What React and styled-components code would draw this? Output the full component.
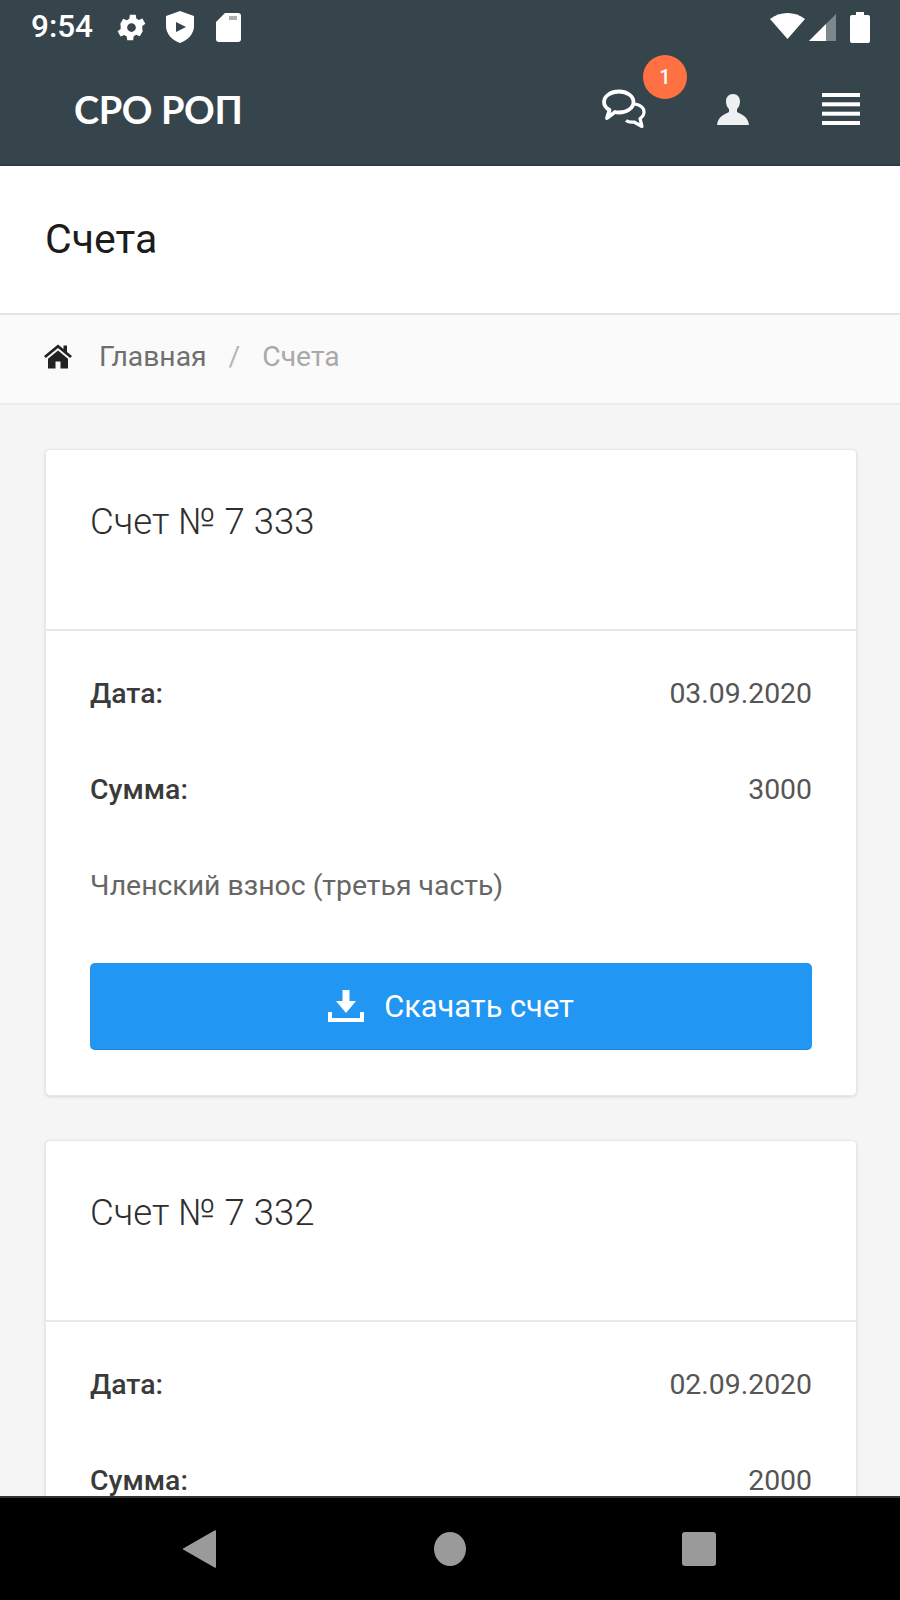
import React from 'react';
import styled, { createGlobalStyle } from 'styled-components';

const Global = createGlobalStyle`
  html, body { margin: 0; padding: 0; background: #f5f5f5; }
  * { box-sizing: border-box; }
`;

const Screen = styled.div`
  width: 900px; height: 1600px; display: flex; flex-direction: column; overflow: hidden;
  font-family: Roboto, "Liberation Sans", sans-serif; background: #f5f5f5;
`;
const TopBar = styled.header`
  flex: none; height: 166px; background: #36444c; display: flex; flex-direction: column;
  border-bottom: 2px solid #2e3b43;
`;
const StatusBar = styled.div`
  height: 54px; display: flex; align-items: center; padding: 0 30px 0 31px; color: #fff;
`;
const Time = styled.span`
  font-size: 31.5px; font-weight: 500; width: 82.5px; line-height: 1;
`;
const StatusIcons = styled.div`
  display: flex; align-items: center; gap: ${p => p.$gap}px; margin-left: ${p => p.$auto ? 'auto' : '0'};
`;
const SignalGroup = styled.div`
  display: flex; align-items: center; gap: 4px; margin-right: 14px;
`;
const AppBar = styled.div`
  flex: 1; display: flex; align-items: center; padding: 0 40px 0 74px; position: relative;
`;
const Logo = styled.div`
  font-family: Lato, sans-serif; font-size: 38px; font-weight: 700; color: #fff; flex: 1;
  letter-spacing: -0.4px;
`;
const Tool = styled.button`
  all: unset; position: relative; display: flex; width: ${p => p.$w}px; justify-content: center;
  margin-left: ${p => p.$ml || 0}px;
`;
const Badge = styled.span`
  position: absolute; left: 41px; top: -34px; width: 44px; height: 44px; border-radius: 50%;
  background: #ff7043; color: #fff; font-size: 20px; font-weight: 500; display: flex;
  align-items: center; justify-content: center;
`;
const TitleBand = styled.div`
  flex: none; height: 149px; background: #fff; border-bottom: 2px solid #e4e4e4; display: flex;
  align-items: center; padding: 0 45px 2px;
`;
const PageTitle = styled.h1`
  margin: 0; font-size: 41px; font-weight: 400; color: #1c1c1c;
`;
const Crumbs = styled.nav`
  flex: none; height: 90px; background: #fafafa; border-bottom: 2px solid #ececec; display: flex;
  align-items: center; padding: 0 44px 6px; font-size: 28.3px; color: #6f6f6f;
`;
const HomeIcon = styled.svg`
  flex: none; margin-top: 1px;
`;
const CrumbLink = styled.span`
  margin-left: 27px;
`;
const Slash = styled.span`
  margin: 0 22px; color: #b5b5b5;
`;
const CrumbNow = styled.span`
  color: #a9a9a9;
`;
const Content = styled.main`
  flex: 1; min-height: 0; overflow: hidden; padding: 44px 43px 0 45px; display: flex;
  flex-direction: column; gap: 44px;
`;
const Card = styled.section`
  flex: none; background: #fff; border: 1px solid #e8e8e8; border-radius: 5px;
  box-shadow: 0 1px 3px rgba(0,0,0,.12);
`;
const CardHead = styled.div`
  height: 181px; border-bottom: 2px solid #e8e8e8; padding: 52px 44px 0;
`;
const CardTitle = styled.h2`
  margin: 0; font-size: 36.6px; font-weight: 300; line-height: 40px; color: #2e2e2e;
`;
const CardBody = styled.div`
  padding: 42px 44px 45px; display: flex; flex-direction: column;
`;
const Row = styled.div`
  display: flex; justify-content: space-between; align-items: center; height: 40px;
  margin-bottom: 56px; font-size: 28.4px;
  &:last-child { margin-bottom: 0; }
`;
const Label = styled.span`
  font-weight: 500; color: #3a3a3a;
`;
const Value = styled.span`
  color: #555; font-weight: 400;
`;
const Note = styled.div`
  height: 40px; line-height: 40px; font-size: 28.4px; color: #666; margin: 1px 0 57px;
`;
const DownloadButton = styled.button`
  all: unset; height: 86px; background: #2196f3; border-radius: 5px; color: #fff; display: flex;
  align-items: center; justify-content: center; gap: 20px; font-size: 30.8px; font-family: inherit;
  border-bottom: 1px solid #1787e6;
`;
const NavBar = styled.footer`
  flex: none; height: 104px; background: #000; display: flex; align-items: center;
  justify-content: space-between; padding: 0 184px 0 183px; border-top: 2px solid #333;
`;

const Gear = () => (
  <svg width="35" height="35" viewBox="0 0 24 24" fill="#fff"><path d="M19.400 13a7.600 7.600 0 0 0 0-2l2.100-1.600-2-3.500-2.500 1a7.400 7.400 0 0 0-1.700-1l-.4-2.600h-4l-.4 2.700a7.400 7.400 0 0 0-1.700 1l-2.500-1-2 3.400L4.600 11a7.600 7.600 0 0 0 0 2l-2.100 1.600 2 3.500 2.500-1a7.400 7.400 0 0 0 1.700 1l.4 2.600h4l.4-2.700a7.400 7.400 0 0 0 1.700-1l2.500 1 2-3.400zM12 15a3 3 0 1 1 0-6 3 3 0 0 1 0 6z"/></svg>
);
const Shield = () => (
  <svg width="28" height="32" viewBox="0 0 28 32"><path fill="#fff" fillRule="evenodd" d="M14 0 28 5v10c0 8-6 14-14 17C6 29 0 23 0 15V5zM10 11v10l10-5z"/></svg>
);
const SdCard = () => (
  <svg width="30" height="29" viewBox="-5 0 30 29"><path fill="#fff" d="M9 0h13a3 3 0 0 1 3 3v23a3 3 0 0 1-3 3H3a3 3 0 0 1-3-3V9z"/><rect x="13" y="3" width="8" height="4" fill="#aab1b5"/></svg>
);
const Wifi = () => (
  <svg width="35" height="29" viewBox="0 0 35 29"><path fill="#fff" d="M17.500 26 0 6C5 2 11 0 17.500 0S30 2 35 6z"/></svg>
);
const Signal = () => (
  <svg width="27" height="27" viewBox="0 0 27 27"><path fill="#7d888e" d="M27 0v27H0z"/><path fill="#fff" d="M17 10v17H0z"/></svg>
);
const Battery = () => (
  <svg width="20" height="31" viewBox="0 0 20 31"><path fill="#fff" d="M6 0h8v3h4a2 2 0 0 1 2 2v24a2 2 0 0 1-2 2H2a2 2 0 0 1-2-2V5a2 2 0 0 1 2-2h4z"/></svg>
);
const Chat = () => (
  <svg width="44" height="40" viewBox="0 0 44 40" fill="none" stroke="#fff" strokeLinejoin="round">
    <path strokeWidth="3.800" d="M17 2.500c8 0 14.500 4.500 14.500 10.500S25 23.500 17 23.500c-1.500 0-3-.2-4-.5L5 29l2.500-8C4 19 2 16.500 2 13 2 7 9 2.500 17 2.500z"/>
    <path strokeWidth="3.200" d="M33 15c5 1 9 3.500 9 8 0 3-1.500 5-4 6.500l2 8-8-4.500c-3 .5-6 0-8-1.500"/>
  </svg>
);
const User = () => (
  <svg width="32" height="31" viewBox="0 0 32 31"><path fill="#eef0f1" d="M16 0c4.500 0 7 3.200 7 7.500 0 3.300-1.400 6-3 7.500v3c3 2 11 3.500 12 13H0c1-9.500 9-11 12-13v-3c-1.600-1.500-3-4.200-3-7.500C9 3.200 11.500 0 16 0z"/></svg>
);
const Menu = () => (
  <svg width="38" height="32" viewBox="0 0 38 32" fill="#fff"><rect width="38" height="4"/><rect y="9.300" width="38" height="4"/><rect y="18.700" width="38" height="4"/><rect y="28" width="38" height="4"/></svg>
);
const Home = () => (
  <HomeIcon width="28" height="25" viewBox="0 0 28 24" fill="#222"><path d="M14 0 0 11.500l1.800 2L14 3.500l12.200 10 1.800-2L23 7.400V1h-3.500v3.500z"/><path d="M14 6 4 14.200V24h7.500v-7h5v7H24v-9.800z"/></HomeIcon>
);
const Download = () => (
  <svg width="36" height="32" viewBox="0 0 36 32" fill="#fff"><path d="M14.500 0h7v11H28L18 23 8 11h6.500z"/><path d="M0 22h4v6h28v-6h4v10H0z"/></svg>
);
const Back = () => <svg width="34" height="38" viewBox="0 0 34 38"><path fill="#9a9a9a" d="M33 1v36a1 1 0 0 1-1.500.6L1 20a1 1 0 0 1 0-2L31.500.4A1 1 0 0 1 33 1z"/></svg>;
const HomeDot = () => <svg width="32" height="34" viewBox="0 0 32 34"><ellipse cx="16" cy="17" rx="16" ry="17" fill="#9a9a9a"/></svg>;
const Square = () => <svg width="34" height="34" viewBox="0 0 34 34"><rect width="34" height="34" rx="3" fill="#9a9a9a"/></svg>;

const invoices = [
  { no: '7 333', date: '03.09.2020', sum: '3000', note: 'Членский взнос (третья часть)' },
  { no: '7 332', date: '02.09.2020', sum: '2000' },
];

export default function App() {
  return (
    <Screen>
      <Global />
      <TopBar>
        <StatusBar>
          <Time>9:54</Time>
          <StatusIcons $gap={17}><Gear /><Shield /><SdCard /></StatusIcons>
          <StatusIcons $auto $gap={0}><SignalGroup><Wifi /><Signal /></SignalGroup><Battery /></StatusIcons>
        </StatusBar>
        <AppBar>
          <Logo>СРО РОП</Logo>
          <Tool $w={44}><Chat /><Badge>1</Badge></Tool>
          <Tool $w={44} $ml={65}><User /></Tool>
          <Tool $w={38} $ml={67}><Menu /></Tool>
        </AppBar>
      </TopBar>
      <TitleBand><PageTitle>Счета</PageTitle></TitleBand>
      <Crumbs>
        <Home />
        <CrumbLink>Главная</CrumbLink>
        <Slash>/</Slash>
        <CrumbNow>Счета</CrumbNow>
      </Crumbs>
      <Content>
        {invoices.map(i => (
          <Card key={i.no}>
            <CardHead><CardTitle>Счет № {i.no}</CardTitle></CardHead>
            <CardBody>
              <Row><Label>Дата:</Label><Value>{i.date}</Value></Row>
              <Row><Label>Сумма:</Label><Value>{i.sum}</Value></Row>
              {i.note && <Note>{i.note}</Note>}
              {i.note && <DownloadButton><Download />Скачать счет</DownloadButton>}
            </CardBody>
          </Card>
        ))}
      </Content>
      <NavBar><Back /><HomeDot /><Square /></NavBar>
    </Screen>
  );
}
